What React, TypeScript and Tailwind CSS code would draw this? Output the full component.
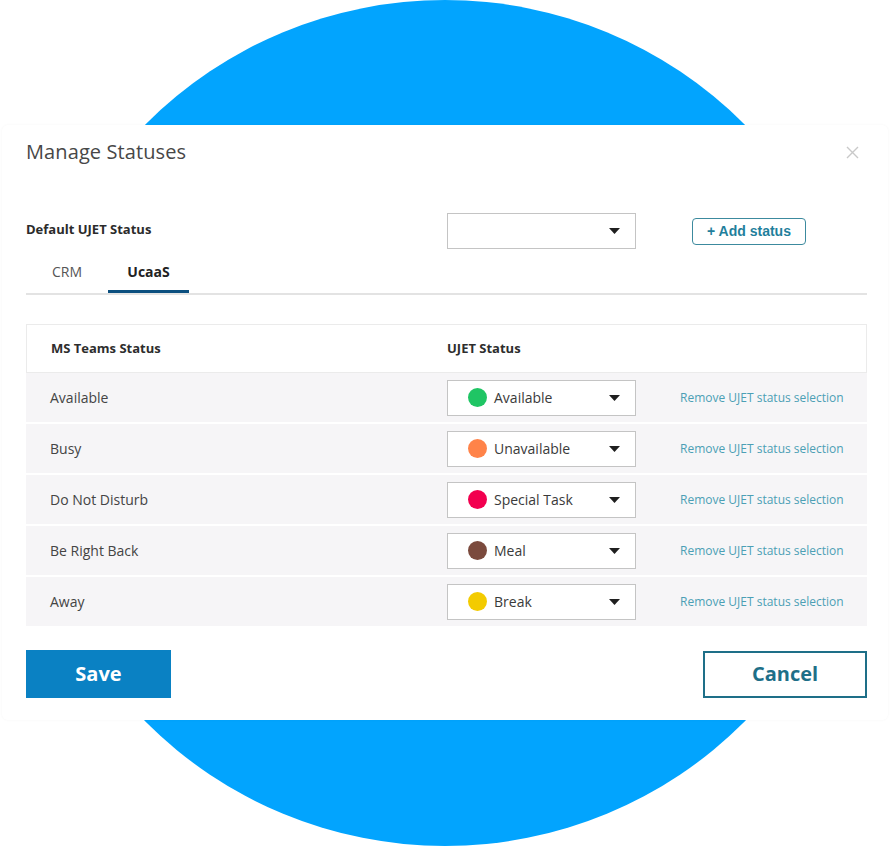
const rows = [
  { label: "Available", status: "Available", color: "bg-[#1fc564]" },
  { label: "Busy", status: "Unavailable", color: "bg-[#ff8349]" },
  { label: "Do Not Disturb", status: "Special Task", color: "bg-[#f2004f]" },
  { label: "Be Right Back", status: "Meal", color: "bg-[#7b4a3d]" },
  { label: "Away", status: "Break", color: "bg-[#f3cb00]" },
];

function Caret() {
  return (
    <svg className="w-[11px] h-[6px]" viewBox="0 0 11 6">
      <path d="M0 0h11L5.5 6z" fill="#1f1f1f" />
    </svg>
  );
}

function Select({ children }: { children?: React.ReactNode }) {
  return (
    <div className="w-[189px] h-[36px] border border-[#c4c4c4] bg-white flex items-center pl-[20px] pr-[15px]">
      <div className="flex-1 flex items-center gap-[7px]">{children}</div>
      <Caret />
    </div>
  );
}

export default function App() {
  return (
    <div
      className="relative w-[890px] h-[846px] bg-white overflow-hidden"
      style={{ fontFamily: '"Open Sans", "Noto Sans", sans-serif' }}
    >
      {/* backdrop circle */}
      <div className="absolute left-[22px] top-0 w-[846px] h-[846px] rounded-full bg-[#02a4fe]" />

      <div className="relative pt-[125px] pl-[2px]">
        <div className="w-[886px] h-[595px] bg-white rounded-[6px] shadow-[0_0_3px_rgba(0,0,0,0.04)] pl-[24px] pr-[21px]">
          {/* header */}
          <div className="flex items-center justify-between pt-[6px] h-[48px]">
            <h2 className="text-[20px] text-[#474747] tracking-[0.1px]">Manage Statuses</h2>
            <svg className="w-[13px] h-[13px] mr-[8px]" viewBox="0 0 13 13">
              <path d="M1 1l11 11M12 1L1 12" stroke="#c9c9c9" strokeWidth="1.4" />
            </svg>
          </div>

          {/* default status */}
          <div className="flex items-center mt-[40px] h-[36px]">
            <div className="w-[421px] text-[13px] font-bold text-[#2b2b2b] mt-[-2px]">
              Default UJET Status
            </div>
            <Select />
            <button
              className="ml-[56px] h-[27px] w-[114px] rounded-[4px] border border-[#3c8a9e] text-[14px] font-bold text-[#1f7f9c]"
              style={{ fontFamily: '"Liberation Sans", Arial, sans-serif' }}
            >
              + Add status
            </button>
          </div>

          {/* tabs */}
          <div className="flex border-b-2 border-[#e3e3e3] mt-[1px]">
            <div className="w-[82px] h-[43px] flex items-center justify-center text-[14px] text-[#555]">
              CRM
            </div>
            <div className="w-[81px] h-[43px] flex items-center justify-center text-[14px] font-bold text-[#222] border-b-[3px] border-[#0b4f7f] mb-[-2px] pt-[2px]">
              UcaaS
            </div>
          </div>

          {/* table */}
          <div className="mt-[29px]">
            <div className="flex items-center h-[49px] border border-[#ebebeb] text-[13px] font-bold text-[#2d2d2d]">
              <div className="w-[420px] pl-[24px]">MS Teams Status</div>
              <div>UJET Status</div>
            </div>
            <div className="flex flex-col gap-[2px]">
              {rows.map((r) => (
                <div key={r.label} className="flex items-center h-[49px] bg-[#f6f5f7]">
                  <div className="w-[421px] pl-[24px] text-[14px] text-[#444]">{r.label}</div>
                  <Select>
                    <span className={`w-[19px] h-[19px] rounded-full ${r.color}`} />
                    <span className="text-[14px] text-[#3a3a3a]">{r.status}</span>
                  </Select>
                  <a className="ml-[44px] text-[12px] text-[#4c9fb5]">Remove UJET status selection</a>
                </div>
              ))}
            </div>
          </div>

          {/* footer */}
          <div className="flex items-center justify-between mt-[24px]">
            <button className="w-[145px] h-[48px] bg-[#0a81c3] text-white text-[20px] font-bold">
              Save
            </button>
            <button className="w-[164px] h-[47px] border-2 border-[#1e6f88] text-[#1e6f88] text-[20px] font-bold">
              Cancel
            </button>
          </div>
        </div>
      </div>
    </div>
  );
}
